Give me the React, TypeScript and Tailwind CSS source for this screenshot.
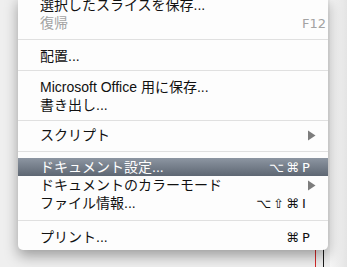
import React from "react";

type Item = {
     label: string;
     mods?: string;
     keyName?: string;
     disabled?: boolean;
     active?: boolean;
     submenu?: boolean;
};

const font = { fontFamily: '"Liberation Sans", "Noto Sans CJK JP", sans-serif' };
const symFont = { fontFamily: '"DejaVu Sans", "Liberation Sans", sans-serif' };

function Arrow({ active }: { active?: boolean }) {
     return (
          <svg width="8" height="11" viewBox="0 0 8 11" className="mr-[12px]">
               <polygon points="0,0.5 7.5,5.5 0,10.5" fill={active ? "#ffffff" : "#7d7d7d"} />
          </svg>
     );
}

function Row({ item }: { item: Item }) {
     const base = item.active
          ? "bg-gradient-to-b from-[#8d96a2] to-[#5e6773] text-white"
          : item.disabled
               ? "text-[#a3a3a3]"
               : "text-[#111111]";
     return (
          <div className={`flex h-[18px] items-center justify-between pl-[22px] text-[14px] leading-none ${base}`}>
               <span className="whitespace-nowrap">{item.label}</span>
               {item.submenu ? (
                    <Arrow active={item.active} />
               ) : item.keyName ? (
                    <div className="flex items-center pr-[6px] text-[13px]" style={symFont}>
                         <span className="tracking-[2px]">{item.mods}</span>
                         <span className="ml-[1px] w-[20px] text-left">{item.keyName}</span>
                    </div>
               ) : null}
          </div>
     );
}

function Sep({ className }: { className: string }) {
     return <div className={`h-px bg-[#e0e0e0] ${className}`} />;
}

export default function App() {
     return (
          <div className="relative h-[267px] w-[347px] overflow-hidden bg-[#efefef]" style={font}>
               <div className="absolute right-0 top-0 h-[267px] w-[17px] bg-gradient-to-r from-[#f7f7f7] to-[#e4e4e4]" />
               <div className="absolute left-[315px] top-[240px] h-[30px] w-px bg-[#d42a2a]" />
               <div className="absolute left-[323px] top-[240px] h-[30px] w-px bg-[#1a1a1a]" />

               <div className="relative ml-[18px] mt-[-4px] w-[310px] rounded-b-[5px] bg-[#fdfdfd] pb-[4px] shadow-[0_6px_14px_rgba(0,0,0,0.35)]">
                    <Row item={{ label: "選択したスライスを保存..." }} />
                    <Row item={{ label: "復帰", keyName: "F12", disabled: true }} />
                    <Sep className="mb-[7px] mt-[7px]" />
                    <Row item={{ label: "配置..." }} />
                    <Sep className="mb-[7px] mt-[5px]" />
                    <Row item={{ label: "Microsoft Office 用に保存..." }} />
                    <Row item={{ label: "書き出し..." }} />
                    <Sep className="mb-[5px] mt-[6px]" />
                    <Row item={{ label: "スクリプト", submenu: true }} />
                    <Sep className="mb-[6px] mt-[7px]" />
                    <Row item={{ label: "ドキュメント設定...", mods: "⌥⌘", keyName: "P", active: true }} />
                    <Row item={{ label: "ドキュメントのカラーモード", submenu: true }} />
                    <Row item={{ label: "ファイル情報...", mods: "⌥⇧⌘", keyName: "I" }} />
                    <Sep className="mb-[7px] mt-[8px]" />
                    <Row item={{ label: "プリント...", mods: "⌘", keyName: "P" }} />
               </div>
          </div>
     );
}
